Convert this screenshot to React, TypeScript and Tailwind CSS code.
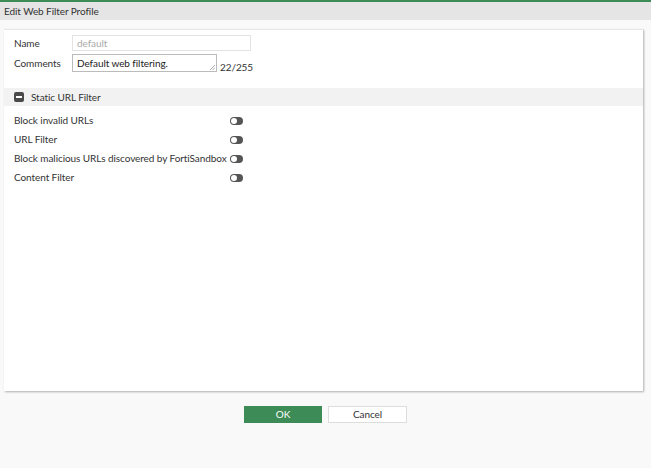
import React from "react";

function Toggle() {
  return (
    <span className="relative inline-block w-[13px] h-[8px] rounded-full bg-[#555]">
      <span className="absolute left-[1px] top-[1px] w-[6px] h-[6px] rounded-full bg-white" />
    </span>
  );
}

export default function App() {
  const rows = [
    "Block invalid URLs",
    "URL Filter",
    "Block malicious URLs discovered by FortiSandbox",
    "Content Filter",
  ];
  return (
    <div
      className="w-[651px] h-[468px] bg-[#f9f9f9] flex flex-col text-[10px] text-[#333] tracking-[-0.08px]"
      style={{ fontFamily: "Lato, 'Liberation Sans', sans-serif" }}
    >
      <div className="h-[2px] bg-[#3c8c57]" />
      <div className="h-[18px] bg-[#e5e5e5] flex items-center pl-[4px] text-[10px] text-[#333]">
        Edit Web Filter Profile
      </div>
      <div className="pt-[9px] pl-[4px] pr-[8px]">
        <div className="bg-white h-[362px] shadow-[1px_1px_2px_rgba(0,0,0,0.3)] border-t border-[#e8e8e8] flex flex-col">
          <div className="pl-[10px] pt-[5px] flex flex-col gap-[3px]">
            <div className="flex items-center h-[16px]">
              <span className="w-[58px]">Name</span>
              <div className="w-[179px] h-[16px] border border-[#e3e3e3] pl-[4px] flex items-center text-[#aaa]">
                default
              </div>
            </div>
            <div className="flex items-end h-[18px]">
              <span className="w-[58px] self-center">Comments</span>
              <div className="relative w-[145px] h-[18px] border border-[#bbb] pl-[4px] flex items-center text-[#222]">
                Default web filtering.
                <svg className="absolute right-[1px] bottom-[1px]" width="6" height="6" viewBox="0 0 6 6">
                  <path d="M1 6L6 1M3.5 6L6 3.5" stroke="#999" strokeWidth="0.8" />
                </svg>
              </div>
              <span className="ml-[3px] leading-[10px]">22/255</span>
            </div>
          </div>
          <div className="mt-[16px] h-[18px] bg-[#f2f2f2] flex items-center pl-[10px]">
            <span className="w-[10px] h-[10px] rounded-[2px] bg-[#4a4a4a] flex items-center justify-center">
              <span className="w-[6px] h-[2px] bg-white" />
            </span>
            <span className="ml-[7px]">Static URL Filter</span>
          </div>
          <div className="pl-[10px] pt-[5px] flex flex-col">
            {rows.map((r) => (
              <div key={r} className="flex items-center h-[19px]">
                <span className="w-[216px] whitespace-nowrap">{r}</span>
                <Toggle />
              </div>
            ))}
          </div>
        </div>
      </div>
      <div className="flex justify-center gap-[6px] mt-[15px]">
        <button className="w-[78px] h-[17px] bg-[#3d8b56] text-white text-[10px] flex items-center justify-center">
          OK
        </button>
        <button className="w-[79px] h-[17px] bg-white border border-[#ddd] text-[#333] text-[10px] flex items-center justify-center">
          Cancel
        </button>
      </div>
    </div>
  );
}
